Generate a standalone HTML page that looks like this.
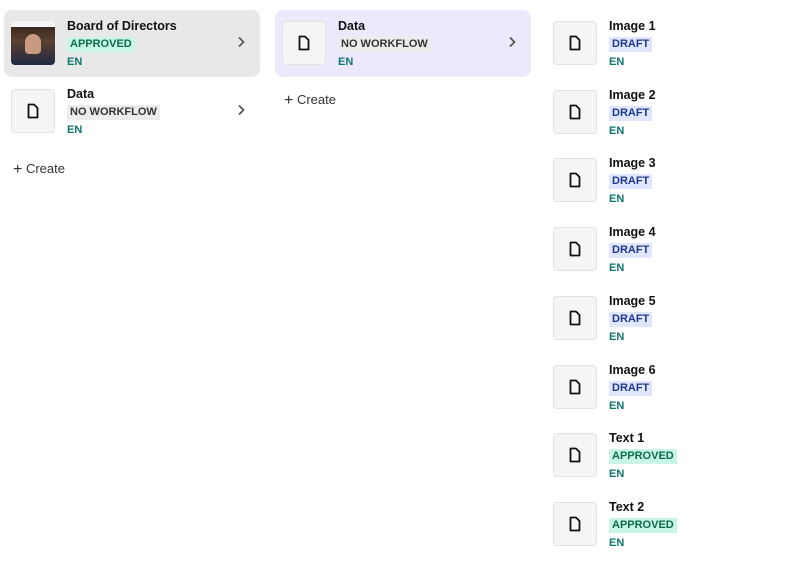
<!DOCTYPE html>
<html><head><style>
body{margin:0;width:800px;height:562px;background:#fff;font-family:"Liberation Sans",sans-serif;position:relative;overflow:hidden}
.it{position:absolute;height:67px;border-radius:8px}
.ic{position:absolute;left:7px;top:11px;width:44px;height:44px;border:1px solid #e2e2e2;border-radius:4px;background:#f5f5f5;box-sizing:border-box;display:flex;align-items:center;justify-content:center}
.t{position:absolute;left:63px;top:9px;font-size:12.5px;font-weight:bold;color:#111;white-space:nowrap}
.b{position:absolute;left:63px;top:27px;font-size:11px;font-weight:bold;padding:0 3px;height:15px;line-height:15px}
.ap{background:#c8f5e4;color:#0d6b4f}
.dr{background:#e0e6ff;color:#1e3a8a}
.nw{background:#ececec;color:#333}
.e{position:absolute;left:63px;top:46px;font-size:11px;font-weight:bold;color:#0f766e}
.ch{position:absolute;right:14px;top:26px}
.cr{position:absolute;font-size:13px;color:#333}
</style></head><body>
<svg width="0" height="0" style="position:absolute"><defs><symbol id="f" viewBox="0 0 16 16"><path d="M3.5 1.5h5.5l3.5 3.5V14.5H3.5z" fill="none" stroke="#111" stroke-width="1.8" stroke-linejoin="round"/></symbol><symbol id="c" viewBox="0 0 10 12"><path d="M3 1.5l4.5 4.5-4.5 4.5" fill="none" stroke="#555" stroke-width="1.7"/></symbol></defs></svg>

<div class="it" style="left:4px;top:10px;width:256px;background:#e8e8e8">
<div class="ic" style="border:none;background:linear-gradient(#f4f4f4 0 14%,#3a2a20 14%,#5a4030 45%,#1f2a44 100%);border-radius:4px"><div style="width:16px;height:20px;border-radius:8px 8px 4px 4px;background:#c89a80;margin-top:2px"></div></div>
<div class="t">Board of Directors</div><div class="b ap">APPROVED</div><div class="e">EN</div>
<svg class="ch" width="10" height="12"><use href="#c"/></svg></div>

<div class="it" style="left:4px;top:78px;width:256px">
<div class="ic"><svg width="16" height="16"><use href="#f"/></svg></div>
<div class="t">Data</div><div class="b nw">NO WORKFLOW</div><div class="e">EN</div>
<svg class="ch" width="10" height="12"><use href="#c"/></svg></div>
<div class="cr" style="left:13px;top:160px"><span style="font-size:16px;position:relative;top:1px">+</span> Create</div>

<div class="it" style="left:275px;top:10px;width:256px;background:#ede9fd">
<div class="ic"><svg width="16" height="16"><use href="#f"/></svg></div>
<div class="t">Data</div><div class="b nw">NO WORKFLOW</div><div class="e">EN</div>
<svg class="ch" width="10" height="12"><use href="#c"/></svg></div>
<div class="cr" style="left:284px;top:91px"><span style="font-size:16px;position:relative;top:1px">+</span> Create</div>

<div class="it" style="left:546px;top:10px;width:200px"><div class="ic"><svg width="16" height="16"><use href="#f"/></svg></div><div class="t">Image 1</div><div class="b dr">DRAFT</div><div class="e">EN</div></div>
<div class="it" style="left:546px;top:79px;width:200px"><div class="ic"><svg width="16" height="16"><use href="#f"/></svg></div><div class="t">Image 2</div><div class="b dr">DRAFT</div><div class="e">EN</div></div>
<div class="it" style="left:546px;top:147px;width:200px"><div class="ic"><svg width="16" height="16"><use href="#f"/></svg></div><div class="t">Image 3</div><div class="b dr">DRAFT</div><div class="e">EN</div></div>
<div class="it" style="left:546px;top:216px;width:200px"><div class="ic"><svg width="16" height="16"><use href="#f"/></svg></div><div class="t">Image 4</div><div class="b dr">DRAFT</div><div class="e">EN</div></div>
<div class="it" style="left:546px;top:285px;width:200px"><div class="ic"><svg width="16" height="16"><use href="#f"/></svg></div><div class="t">Image 5</div><div class="b dr">DRAFT</div><div class="e">EN</div></div>
<div class="it" style="left:546px;top:354px;width:200px"><div class="ic"><svg width="16" height="16"><use href="#f"/></svg></div><div class="t">Image 6</div><div class="b dr">DRAFT</div><div class="e">EN</div></div>
<div class="it" style="left:546px;top:422px;width:200px"><div class="ic"><svg width="16" height="16"><use href="#f"/></svg></div><div class="t">Text 1</div><div class="b ap">APPROVED</div><div class="e">EN</div></div>
<div class="it" style="left:546px;top:491px;width:200px"><div class="ic"><svg width="16" height="16"><use href="#f"/></svg></div><div class="t">Text 2</div><div class="b ap">APPROVED</div><div class="e">EN</div></div>
</body></html>
